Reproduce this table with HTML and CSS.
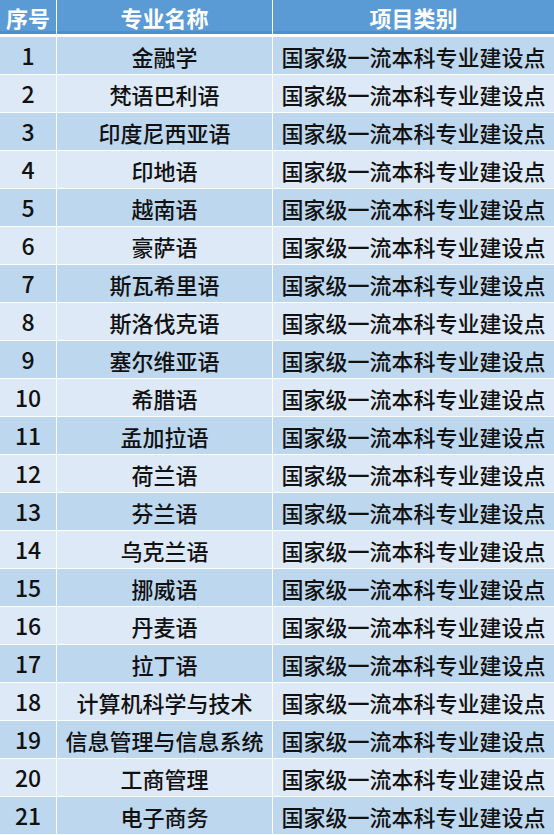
FILE: index.html
```html
<!DOCTYPE html>
<html lang="zh-CN">
<head>
<meta charset="utf-8">
<title>专业名单</title>
<link rel="stylesheet" href="styles.css">
</head>
<body>
<div class="table">
  <div class="row head">
    <div class="cell">序号</div>
    <div class="cell">专业名称</div>
    <div class="cell">项目类别</div>
  </div>
  <div class="row odd"><div class="cell">1</div><div class="cell">金融学</div><div class="cell">国家级一流本科专业建设点</div></div>
  <div class="row even"><div class="cell">2</div><div class="cell">梵语巴利语</div><div class="cell">国家级一流本科专业建设点</div></div>
  <div class="row odd"><div class="cell">3</div><div class="cell">印度尼西亚语</div><div class="cell">国家级一流本科专业建设点</div></div>
  <div class="row even"><div class="cell">4</div><div class="cell">印地语</div><div class="cell">国家级一流本科专业建设点</div></div>
  <div class="row odd"><div class="cell">5</div><div class="cell">越南语</div><div class="cell">国家级一流本科专业建设点</div></div>
  <div class="row even"><div class="cell">6</div><div class="cell">豪萨语</div><div class="cell">国家级一流本科专业建设点</div></div>
  <div class="row odd"><div class="cell">7</div><div class="cell">斯瓦希里语</div><div class="cell">国家级一流本科专业建设点</div></div>
  <div class="row even"><div class="cell">8</div><div class="cell">斯洛伐克语</div><div class="cell">国家级一流本科专业建设点</div></div>
  <div class="row odd"><div class="cell">9</div><div class="cell">塞尔维亚语</div><div class="cell">国家级一流本科专业建设点</div></div>
  <div class="row even"><div class="cell">10</div><div class="cell">希腊语</div><div class="cell">国家级一流本科专业建设点</div></div>
  <div class="row odd"><div class="cell">11</div><div class="cell">孟加拉语</div><div class="cell">国家级一流本科专业建设点</div></div>
  <div class="row even"><div class="cell">12</div><div class="cell">荷兰语</div><div class="cell">国家级一流本科专业建设点</div></div>
  <div class="row odd"><div class="cell">13</div><div class="cell">芬兰语</div><div class="cell">国家级一流本科专业建设点</div></div>
  <div class="row even"><div class="cell">14</div><div class="cell">乌克兰语</div><div class="cell">国家级一流本科专业建设点</div></div>
  <div class="row odd"><div class="cell">15</div><div class="cell">挪威语</div><div class="cell">国家级一流本科专业建设点</div></div>
  <div class="row even"><div class="cell">16</div><div class="cell">丹麦语</div><div class="cell">国家级一流本科专业建设点</div></div>
  <div class="row odd"><div class="cell">17</div><div class="cell">拉丁语</div><div class="cell">国家级一流本科专业建设点</div></div>
  <div class="row even"><div class="cell">18</div><div class="cell">计算机科学与技术</div><div class="cell">国家级一流本科专业建设点</div></div>
  <div class="row odd"><div class="cell">19</div><div class="cell">信息管理与信息系统</div><div class="cell">国家级一流本科专业建设点</div></div>
  <div class="row even"><div class="cell">20</div><div class="cell">工商管理</div><div class="cell">国家级一流本科专业建设点</div></div>
  <div class="row odd"><div class="cell">21</div><div class="cell">电子商务</div><div class="cell">国家级一流本科专业建设点</div></div>
</div>
</body>
</html>
```
FILE: styles.css
```css
html, body {
  margin: 0;
  padding: 0;
  background: #ffffff;
}
body {
  font-family: "Noto Sans CJK SC", "Noto Sans", sans-serif;
  font-size: 22px;
  font-weight: 500;
  color: #111111;
}
.table {
  width: 554px;
}
.row {
  display: grid;
  grid-template-columns: 56px 215px 1fr;
  column-gap: 1px;
  height: 37px;
  border-bottom: 1px solid #ffffff;
  background: #ffffff;
}
.cell {
  display: flex;
  align-items: center;
  justify-content: center;
  white-space: nowrap;
  line-height: 1;
}
.row .cell:first-child {
  font-size: 23px;
}
.head {
  height: 34px;
  border-bottom: 3px solid #ffffff;
}
.head .cell,
.head .cell:first-child {
  background: #5b9bd5;
  color: #ffffff;
  font-weight: bold;
  font-size: 22px;
  box-shadow: inset 0 -3px 0 #4f8ecb;
}
.odd .cell {
  background: #bdd7ee;
}
.even .cell {
  background: #dde9f6;
}
```
